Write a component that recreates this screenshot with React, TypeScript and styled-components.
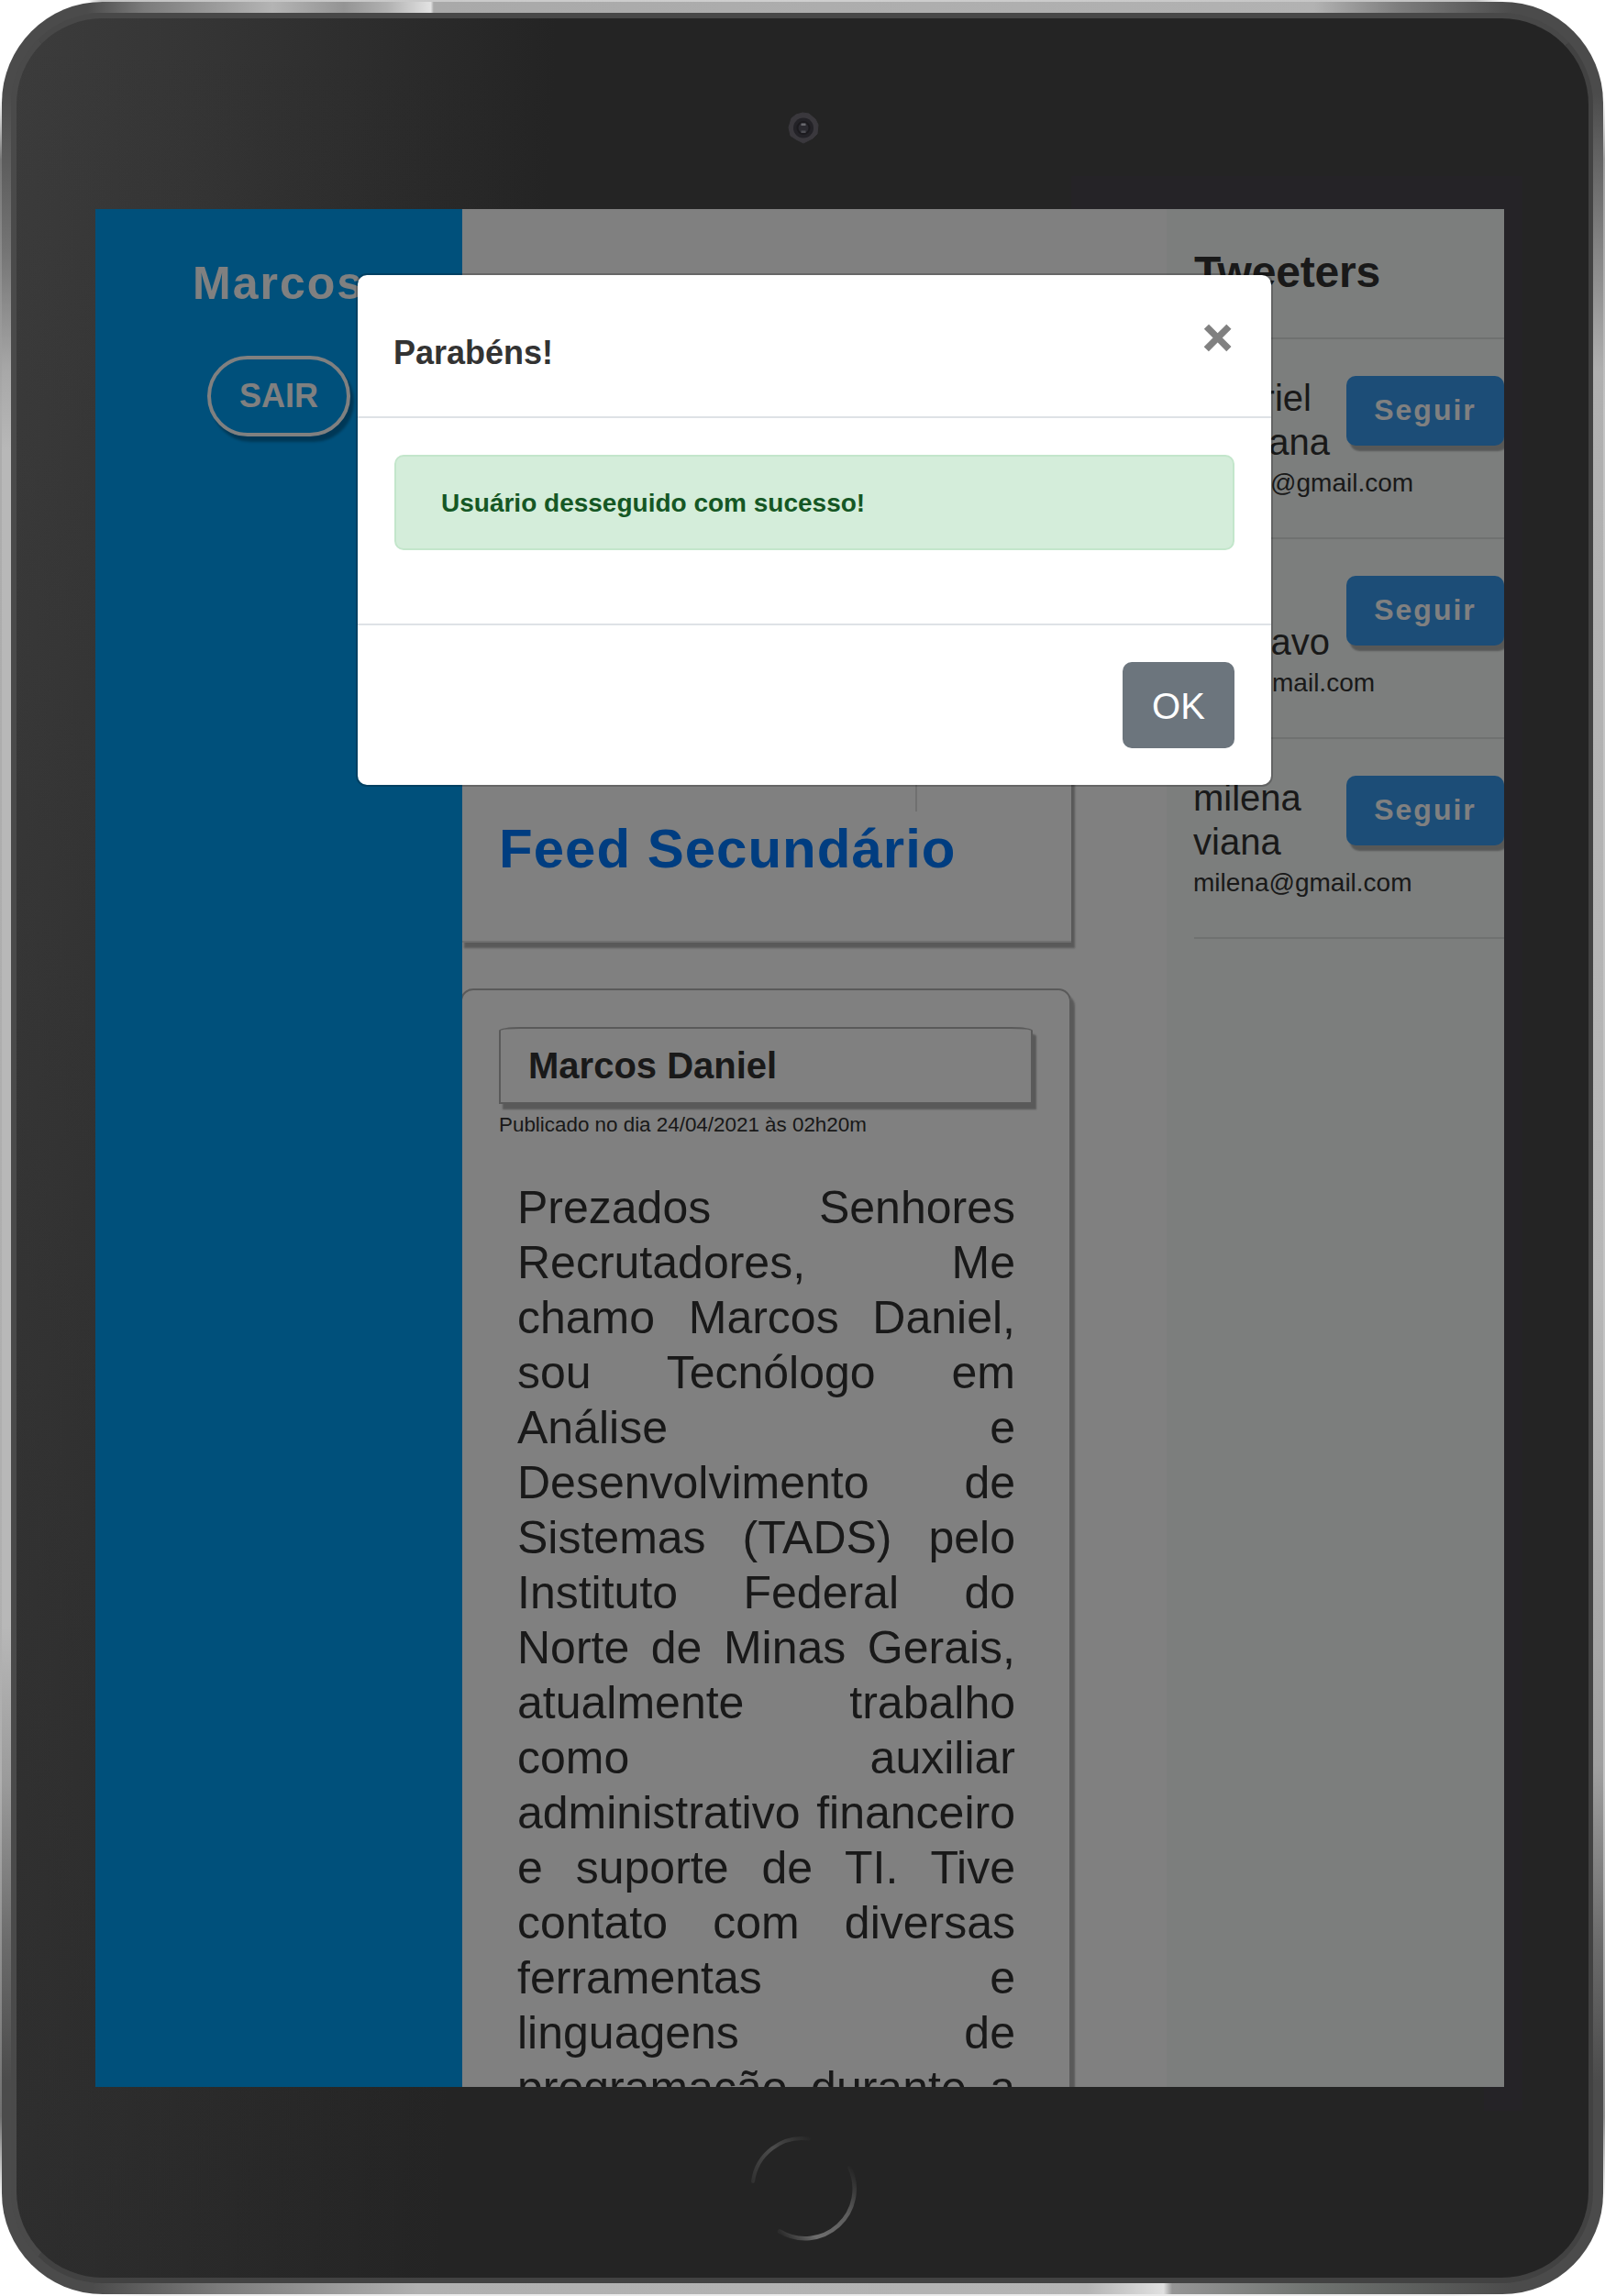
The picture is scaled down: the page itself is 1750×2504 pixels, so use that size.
import React from "react";
import styled, { createGlobalStyle } from "styled-components";

const GlobalStyle = createGlobalStyle`
  *, *::before, *::after { box-sizing: border-box; }
  body {
    margin: 0;
    background: #fff;
    font-family: "Liberation Sans", Arial, Helvetica, sans-serif;
    color: #333;
  }
  h1, h2, h3, p, ul { margin: 0; padding: 0; font-weight: inherit; }
  button { font-family: inherit; cursor: pointer; }
`;

/* ---------- device ---------- */

const Tablet = styled.div`
  width: 1750px;
  height: 2504px;
  padding: 2px;
  background:
    linear-gradient(90deg, #c4c4c400 0, #c4c4c4 1%, #cfcfcf 50%, #c4c4c4 98%, #c4c4c400 100%) 95px 0 / 1545px 2px no-repeat,
    linear-gradient(90deg, #e8e8e800 0, #ececec 4%, #ececec 96%, #e8e8e800 100%) 105px 100% / 1540px 2px no-repeat,
    linear-gradient(180deg, #a0a0a000 0, #777 3%, #acacac 15%, #b0b0b0 80%, #707070 96%, #a0a0a000 100%) 0 105px / 2px 2295px no-repeat,
    linear-gradient(180deg, #a0a0a000 0, #a0a0a0 3%, #c4c4c4 15%, #c4c4c4 80%, #909090 96%, #a0a0a000 100%) 100% 105px / 2px 2295px no-repeat,
    #fff;
`;

const Frame = styled.div`
  width: 1746px;
  height: 2500px;
  padding: 12px 11px 12px 10px;
  border-radius: 110px;
  background:
    linear-gradient(90deg, #4d4d4d00 0, #7b7b7b 4%, #b4b4b4 13%, #949494 18%, #b0b0b0 21%, #e2e2e2 24.1%, #a9a9a9 24.3%, #b2b2b2 86%, #7d7d7d 92%, #4d4d4d00 100%) 93px 0 / 1555px 12px no-repeat,
    linear-gradient(90deg, #4d4d4d00 0, #7b7b7b 9%, #b0b0b0 23%, #b4b4b4 70%, #e0e0e0 75.4%, #959595 76%, #6e726f 86%, #40404000 100%) 98px 100% / 1550px 12px no-repeat,
    linear-gradient(180deg, #4d4d4d00 0, #757575 8%, #a8a8a8 14%, #b8b8b8 18%, #b8b8b8 77%, #9a9a9a 85%, #6b6b6b 93%, #4d4d4d00 100%) 0 100px / 10px 2170px no-repeat,
    linear-gradient(180deg, #4d4d4d00 0, #707070 5%, #b0b0b0 14%, #b8b8b8 60%, #a0a0a0 84%, #6b6b6b 93%, #40404000 100%) 100% 100px / 11px 2170px no-repeat,
    #4b4b4b;
`;

const Bezel = styled.div`
  height: 2476px;
  border-radius: 100px;
  border: solid #424242;
  border-width: 6px 5px 6px 6px;
  border-color: #484848 #424242 #424242 #4a4a4a;
  background:
    linear-gradient(#252327, #252327) 1150px 172px / 492px 300px no-repeat,
    linear-gradient(#252327, #252327) 1600px 172px / 42px 2110px no-repeat,
    linear-gradient(180deg, rgba(36, 36, 36, 0) 0%, rgba(36, 36, 36, 0.5) 100%),
    linear-gradient(93deg, #3c3c3c 0, #343434 12%, #242424 32%, #242424 100%);
  background-color: #242424;
  display: flex;
  flex-direction: column;
  padding: 0 0 0 86px;
`;

const CameraArea = styled.div`
  width: 1536px;
  height: 208px;
  padding: 101px 0 0 754px;
`;

const HomeArea = styled.div`
  width: 1536px;
  padding: 50px 0 0 710px;
`;

const Screen = styled.div`
  position: relative;
  flex: none;
  width: 1536px;
  height: 2048px;
  display: flex;
  overflow: hidden;
  background: #fff;
`;

/* ---------- page columns ---------- */

const Sidebar = styled.aside`
  width: 400px;
  background: #00a0f6;
  display: flex;
  flex-direction: column;
  align-items: flex-start;
  flex: none;
`;

const UserName = styled.h1`
  margin: 51px 0 0 106px;
  font-size: 50px;
  line-height: 60px;
  font-weight: 700;
  letter-spacing: 2px;
  color: #fff;
`;

const LogoutButton = styled.button`
  margin: 49px 0 0 122px;
  width: 156px;
  height: 88px;
  padding: 0;
  border: 4px solid #fff;
  border-radius: 44px;
  background: #00a0f6;
  color: #fff;
  font-size: 36px;
  font-weight: 700;
  box-shadow: 4px 6px 3px rgba(0, 0, 0, 0.3);
`;

const Main = styled.main`
  width: 768px;
  flex: none;
  padding-top: 100px;
  overflow: hidden;
`;

const FeedHeader = styled.section`
  width: 666px;
  height: 700px;
  margin-left: -2px;
  padding: 0 40px;
  border: 2px solid rgba(0, 0, 0, 0.125);
  border-width: 0 0 2px 2px;
  box-shadow: 4px 6px 2px rgba(0, 0, 0, 0.3);
`;

const Counter = styled.div`
  width: 456px;
  height: 557px;
  border-right: 2px solid rgba(0, 0, 0, 0.125);
`;

const FeedTitle = styled.h2`
  margin-top: 5px;
  font-size: 60px;
  line-height: 72px;
  letter-spacing: 1px;
  font-weight: 700;
  color: #007bff;
  white-space: nowrap;
`;

const Post = styled.article`
  width: 666px;
  height: 1600px;
  margin: 50px 0 0 -2px;
  padding: 40px;
  border: 2px solid #b3b3b3;
  border-radius: 14px;
  box-shadow: 4px 6px 2px rgba(0, 0, 0, 0.3);
`;

const Author = styled.h3`
  height: 84px;
  padding-left: 30px;
  border: 2px solid #b3b3b3;
  border-radius: 24px / 4px;
  border-bottom-left-radius: 0;
  border-bottom-right-radius: 0;
  box-shadow: 4px 6px 2px rgba(0, 0, 0, 0.3);
  font-size: 40px;
  line-height: 80px;
  font-weight: 700;
`;

const Published = styled.p`
  font-size: 22.4px;
  line-height: 34px;
  margin-top: 6px;
`;

const PostBody = styled.p`
  margin: 43px 19px 0 20px;
  font-size: 50px;
  line-height: 60px;
  text-align: justify;
`;

const People = styled.aside`
  width: 368px;
  flex: none;
  padding-left: 30px;
  background: #f8fcfa;
`;

const PeopleTitle = styled.h2`
  height: 142px;
  padding-top: 40px;
  border-bottom: 2px solid rgba(0, 0, 0, 0.1);
  font-size: 48px;
  line-height: 58px;
  font-weight: 700;
  letter-spacing: -0.2px;
`;

const Person = styled.li`
  height: 218px;
  padding-top: 40px;
  border-bottom: 2px solid rgba(0, 0, 0, 0.1);
  display: flex;
  justify-content: space-between;
  align-items: flex-start;
`;

const PersonInfo = styled.div`
  width: 166px;
  margin-left: -1px;
`;

const PersonName = styled.p`
  font-size: 40px;
  line-height: 48px;
`;

const PersonEmail = styled.p`
  font-size: 28px;
  line-height: 42px;
  white-space: nowrap;
`;

const FollowButton = styled.button`
  width: 172px;
  height: 76px;
  padding: 0 0 2px;
  border: 0;
  border-radius: 10px;
  background: #3899ee;
  color: #fff;
  font-size: 32px;
  font-weight: 700;
  letter-spacing: 2px;
  box-shadow: 4px 6px 2px rgba(0, 0, 0, 0.3);
`;

/* ---------- dialog ---------- */

const Backdrop = styled.div`
  position: absolute;
  inset: 0;
  background: rgba(0, 0, 0, 0.498);
  display: flex;
  align-items: flex-start;
  padding: 70px 0 0 284px;
`;

const Dialog = styled.div`
  width: 1000px;
  height: 560px;
  border: 2px solid rgba(0, 0, 0, 0.2);
  border-radius: 12px;
  background: #fff;
  background-clip: padding-box;
  display: flex;
  flex-direction: column;
`;

const DialogHeader = styled.header`
  height: 156px;
  padding: 40px;
  border-bottom: 2px solid #dee2e6;
  display: flex;
  justify-content: space-between;
`;

const DialogTitle = styled.h2`
  margin: 24px 0 0 -1px;
  font-size: 36px;
  line-height: 42px;
  font-weight: 700;
`;

const CloseButton = styled.button`
  height: 56px;
  padding: 0 2px 0 0;
  border: 0;
  background: none;
  color: #808080;
  font-size: 56px;
  line-height: 56px;
  font-weight: 700;
  -webkit-text-stroke: 1.2px #808080;
`;

const DialogBody = styled.div`
  height: 224px;
  padding: 40px;
`;

const Alert = styled.p`
  height: 104px;
  padding-left: 49px;
  border: 2px solid #c3e6cb;
  border-radius: 10px;
  background: #d4edda;
  color: #155724;
  font-size: 28px;
  line-height: 102px;
  font-weight: 700;
`;

const DialogFooter = styled.footer`
  flex: 1;
  padding: 40px;
  border-top: 2px solid #dee2e6;
  display: flex;
  justify-content: flex-end;
  align-items: flex-start;
`;

const OkButton = styled.button`
  width: 122px;
  height: 94px;
  padding: 2px 0 0;
  border: 0;
  border-radius: 10px;
  background: #6c757d;
  color: #fff;
  font-size: 40px;
`;

const people = [
  { lines: ["Gabriel", "Santana"], email: "gabriel@gmail.com" },
  { lines: ["Luiz", "Gustavo"], email: "luiz@gmail.com" },
  { lines: ["milena", "viana"], email: "milena@gmail.com" },
];

const Camera = () => (
  <svg width="36" height="36" viewBox="0 0 36 36">
    <path
      d="M17 2 L24 3 L31 9 L34 15 L33 25 L28 30 L18 35 L10 31 L4 27 L2 18 L5 8 L10 4 Z"
      fill="#3a383d"
      stroke="#3a383d"
      strokeWidth="1"
      strokeLinejoin="round"
    />
    <circle cx="18" cy="18.500" r="11" fill="#232227" />
    <circle cx="18" cy="18.500" r="6.500" fill="#2b2a30" stroke="#1b1a1e" strokeWidth="2" />
    <rect x="15.500" y="13.500" width="5" height="2.500" fill="#69696e" />
    <rect x="15.500" y="21.500" width="5" height="2.500" fill="#4c4c52" />
  </svg>
);

const HomeButton = () => (
  <svg width="120" height="120" viewBox="0 0 120 120" fill="none" strokeLinecap="round">
    <defs>
      <linearGradient id="homeUpper" x1="6" y1="56" x2="72" y2="6" gradientUnits="userSpaceOnUse">
        <stop offset="0" stopColor="#303030" />
        <stop offset="0.5" stopColor="#4c4c4c" />
        <stop offset="1" stopColor="#242424" />
      </linearGradient>
      <linearGradient id="homeLower" x1="114" y1="36" x2="34" y2="106" gradientUnits="userSpaceOnUse">
        <stop offset="0" stopColor="#242424" />
        <stop offset="0.35" stopColor="#5c5c5c" />
        <stop offset="0.75" stopColor="#6e6e6e" />
        <stop offset="1" stopColor="#2c2c2c" />
      </linearGradient>
    </defs>
    <path d="M7 53 A54 54 0 0 1 68 6.500" stroke="url(#homeUpper)" strokeWidth="4" />
    <path d="M112.500 38 A54 54 0 0 1 36 107.500" stroke="url(#homeLower)" strokeWidth="4.500" />
  </svg>
);

export default function App() {
  return (
    <>
      <GlobalStyle />
      <Tablet>
        <Frame>
          <Bezel>
            <CameraArea>
              <Camera />
            </CameraArea>
            <Screen>
              <Sidebar>
                <UserName>Marcos</UserName>
                <LogoutButton>SAIR</LogoutButton>
              </Sidebar>
              <Main>
                <FeedHeader>
                  <Counter />
                  <FeedTitle>Feed Secundário</FeedTitle>
                </FeedHeader>
                <Post>
                  <Author>Marcos Daniel</Author>
                  <Published>Publicado no dia 24/04/2021 às 02h20m</Published>
                  <PostBody>
                    Prezados Senhores Recrutadores, Me chamo Marcos Daniel, sou Tecnólogo em Análise e
                    Desenvolvimento de Sistemas (TADS) pelo Instituto Federal do Norte de Minas Gerais,
                    atualmente trabalho como auxiliar administrativo financeiro e suporte de TI. Tive
                    contato com diversas ferramentas e linguagens de programação durante a graduação.
                  </PostBody>
                </Post>
              </Main>
              <People>
                <PeopleTitle>Tweeters</PeopleTitle>
                <ul>
                  {people.map((person) => (
                    <Person key={person.email}>
                      <PersonInfo>
                        {person.lines.map((line) => (
                          <PersonName key={line}>{line}</PersonName>
                        ))}
                        <PersonEmail>{person.email}</PersonEmail>
                      </PersonInfo>
                      <FollowButton>Seguir</FollowButton>
                    </Person>
                  ))}
                </ul>
              </People>
              <Backdrop>
                <Dialog role="dialog">
                  <DialogHeader>
                    <DialogTitle>Parabéns!</DialogTitle>
                    <CloseButton aria-label="Fechar">×</CloseButton>
                  </DialogHeader>
                  <DialogBody>
                    <Alert>Usuário desseguido com sucesso!</Alert>
                  </DialogBody>
                  <DialogFooter>
                    <OkButton>OK</OkButton>
                  </DialogFooter>
                </Dialog>
              </Backdrop>
            </Screen>
            <HomeArea>
              <HomeButton />
            </HomeArea>
          </Bezel>
        </Frame>
      </Tablet>
    </>
  );
}
